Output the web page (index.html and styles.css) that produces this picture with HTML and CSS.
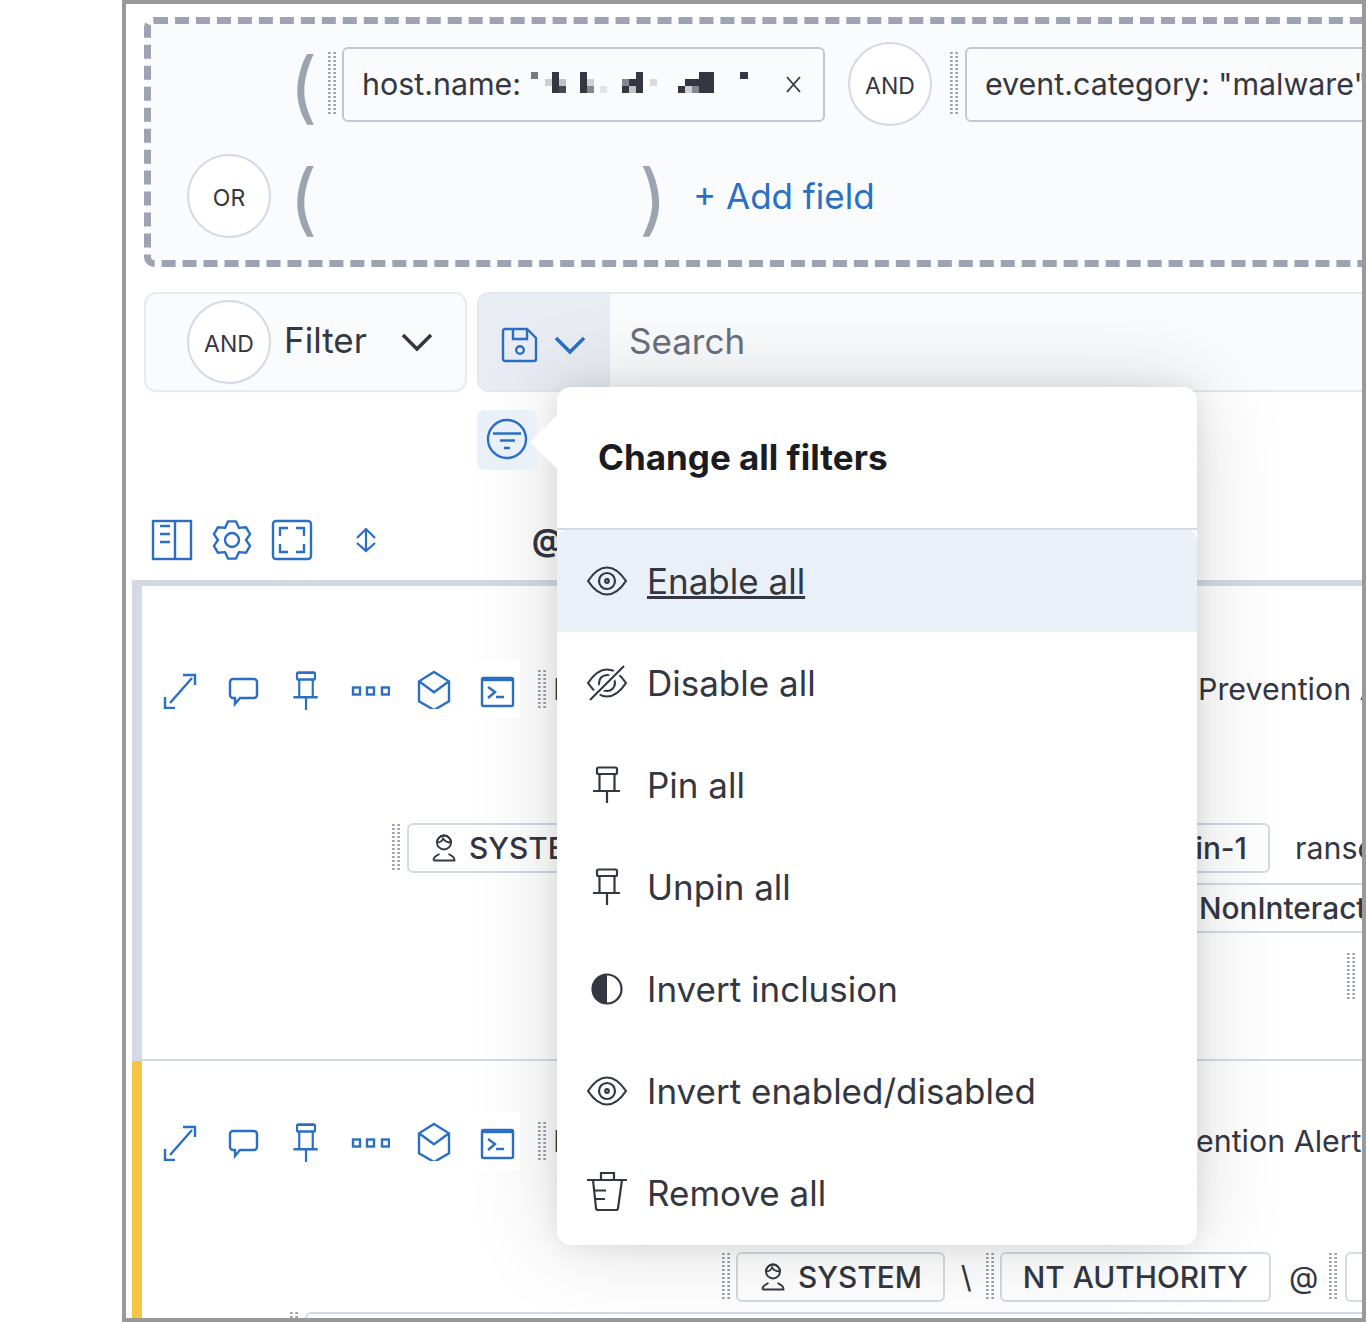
FILE: index.html
```html
<!DOCTYPE html>
<html lang="en">
<head>
    <meta charset="UTF-8">
    <meta name="viewport" content="width=device-width, initial-scale=1.0">
    <title>Change all filters</title>
    <link rel="stylesheet" href="styles.css">
</head>
<body>
    <!-- shared icons -->
    <svg class="icon-defs" aria-hidden="true">
        <symbol id="i-eye" viewBox="0 0 40 40">
            <path d="M1 20C7 11 13 6.500 20 6.500S33 11 39 20C33 29 27 33.500 20 33.500S7 29 1 20Z"/>
            <circle cx="20" cy="20" r="8"/>
            <circle class="solid" cx="20" cy="20" r="1.800"/>
        </symbol>
        <symbol id="i-pin" viewBox="0 0 40 40" preserveAspectRatio="none">
            <rect x="10" y="2.500" width="20" height="6.500" rx="1.500"/>
            <path d="M12.500 9V26M27.500 9V26M6 26H33M20 26V38"/>
        </symbol>
        <symbol id="i-user" viewBox="0 0 24 28">
            <circle cx="12" cy="8.500" r="7"/>
            <path class="solid" d="M5 8.500A7 7 0 0 1 19 8.500C15 8.500 12.500 7 11 4.500C10 7.500 8 8.500 5 8.500Z"/>
            <path d="M1.500 26.500H22.500C23 22.500 19 21.500 16.500 20M7.500 20C5 21.500 1 22.500 1.500 26.500"/>
        </symbol>
        <symbol id="i-expand" viewBox="0 0 40 40">
            <path d="M10 34L32 9M23 6H35V16M5 28V39H15"/>
        </symbol>
        <symbol id="i-comment" viewBox="0 0 40 40">
            <path d="M9 10H30A3 3 0 0 1 33 13V26A3 3 0 0 1 30 29H16L11 35V29H9A3 3 0 0 1 6 26V13A3 3 0 0 1 9 10Z"/>
        </symbol>
        <symbol id="i-dots" viewBox="0 0 40 40">
            <rect x="3" y="18.500" width="7" height="7"/>
            <rect x="17" y="18.500" width="7" height="7"/>
            <rect x="32" y="18.500" width="7" height="7"/>
        </symbol>
        <symbol id="i-cube" viewBox="0 0 40 40">
            <path d="M20 3L35 12.300V32.300L20 41L5 32.300V12.300ZM5 12.300L20 23.300L35 12.300"/>
        </symbol>
        <symbol id="i-terminal" viewBox="0 0 40 40">
            <rect x="4" y="9" width="31" height="28" rx="1.500"/>
            <path class="bar" d="M4 11H35"/>
            <path d="M10 18L17 23L10 29M18 28H26"/>
        </symbol>
    </svg>

    <div class="frame">
        <section class="query-box">
            <div class="query-row">
                <span class="slot"></span>
                <span class="paren">(</span>
                <span class="handle"></span>
                <div class="field host-field">
                    <span>host.name:</span>
                    <svg class="redacted" width="218" height="21" viewBox="0 0 218 21">
                        <rect x="0" y="0" width="7" height="7" fill="#77797f"/>
                        <rect x="14" y="7" width="7" height="7" fill="#ccced2"/>
                        <rect x="21" y="0" width="7" height="21" fill="#343741"/>
                        <rect x="28" y="7" width="7" height="7" fill="#bfc1c5"/>
                        <rect x="28" y="14" width="7" height="7" fill="#45484f"/>
                        <rect x="49" y="0" width="7" height="21" fill="#343741"/>
                        <rect x="56" y="7" width="7" height="7" fill="#cfd1d4"/>
                        <rect x="56" y="14" width="7" height="7" fill="#85878c"/>
                        <rect x="69" y="14" width="7" height="7" fill="#e2e3e5"/>
                        <rect x="91" y="7" width="7" height="7" fill="#85878c"/>
                        <rect x="91" y="14" width="7" height="7" fill="#343741"/>
                        <rect x="98" y="7" width="7" height="7" fill="#343741"/>
                        <rect x="98" y="14" width="7" height="7" fill="#bfc1c5"/>
                        <rect x="105" y="0" width="7" height="21" fill="#343741"/>
                        <rect x="119" y="7" width="7" height="7" fill="#d8d9dc"/>
                        <rect x="147" y="14" width="7" height="7" fill="#343741"/>
                        <rect x="154" y="7" width="7" height="7" fill="#343741"/>
                        <rect x="154" y="14" width="7" height="7" fill="#d0d1d4"/>
                        <rect x="161" y="7" width="7" height="7" fill="#343741"/>
                        <rect x="161" y="14" width="7" height="7" fill="#85878c"/>
                        <rect x="168" y="0" width="15" height="21" fill="#343741"/>
                        <rect x="209" y="0" width="8" height="7" fill="#343741"/>
                    </svg>
                    <svg class="icon close-icon" width="15" height="17" viewBox="0 0 15 17">
                        <path d="M1 1L14 16M14 1L1 16"/>
                    </svg>
                </div>
                <span class="logic-badge and-first">AND</span>
                <span class="handle"></span>
                <div class="field category-field">event.category: "malware"</div>
            </div>
            <div class="query-row">
                <span class="logic-badge">OR</span>
                <span class="paren">(</span>
                <span class="paren paren-close">)</span>
                <a class="add-field" href="#">+ Add field</a>
            </div>
        </section>

        <div class="search-row">
            <div class="filter-select">
                <span class="logic-badge">AND</span>
                <span class="filter-label">Filter</span>
                <svg class="icon chevron dark" width="32" height="18" viewBox="0 0 32 18">
                    <path d="M2 2L16 16L30 2"/>
                </svg>
            </div>
            <div class="search-box">
                <div class="saved-queries">
                    <svg class="icon blue" width="40" height="40" viewBox="0 0 40 40">
                        <path d="M5 4H27L36 13V34A2 2 0 0 1 34 36H5A2 2 0 0 1 3 34V6A2 2 0 0 1 5 4ZM13 4V14H27V4"/>
                        <circle cx="20" cy="25" r="3.800"/>
                    </svg>
                    <svg class="icon chevron blue" width="32" height="18" viewBox="0 0 32 18">
                        <path d="M2 2L16 16L30 2"/>
                    </svg>
                </div>
                <span class="search-text">Search</span>
            </div>
        </div>

        <button class="filter-button" type="button">
            <svg class="icon blue" width="42" height="42" viewBox="0 0 42 42">
                <circle cx="21" cy="20" r="19"/>
                <path d="M7 14.500H35M14 21.500H29M18 29H24"/>
            </svg>
        </button>

        <div class="toolbar">
            <svg class="icon blue" width="40" height="40" viewBox="0 0 40 40">
                <rect x="1" y="1" width="38" height="38"/>
                <path d="M23 1V39M8 6H18M8 14H18M8 22H18"/>
            </svg>
            <svg class="icon blue" width="40" height="40" viewBox="0 0 40 40">
                <path stroke-linejoin="round" d="M16 1.400H24L27 7.900L34.100 7.300L38.100 14.100L34 20L38.100 25.900L34.100 32.700L27 32.100L24 38.600H16L13 32.100L5.900 32.700L1.900 25.900L6 20L1.900 14.100L5.900 7.300L13 7.900Z"/>
                <circle cx="20" cy="20" r="7"/>
            </svg>
            <svg class="icon blue" width="40" height="40" viewBox="0 0 40 40">
                <rect x="1" y="1" width="38" height="38" rx="3"/>
                <path d="M16 8H8V16M24 8H32V16M16 32H8V24M24 32H32V24"/>
            </svg>
            <svg class="icon blue sort-icon" width="40" height="40" viewBox="0 0 40 40">
                <path d="M11 18L20 9L29 18M11 23L20 31L29 23M20 10V30"/>
            </svg>
            <span class="column-title">@timestamp</span>
        </div>

        <div class="timeline">
            <article class="event event-first">
                <div class="event-head">
                    <span class="action"><svg class="icon blue" width="40" height="40"><use href="#i-expand"/></svg></span>
                    <span class="action action-tight"><svg class="icon blue" width="40" height="40"><use href="#i-comment"/></svg></span>
                    <span class="action"><svg class="icon blue pin-icon" width="36" height="42"><use href="#i-pin"/></svg></span>
                    <span class="action"><svg class="icon blue" width="40" height="40"><use href="#i-dots"/></svg></span>
                    <span class="action"><svg class="icon blue" width="40" height="40"><use href="#i-cube"/></svg></span>
                    <span class="action action-last"><svg class="icon blue" width="40" height="40"><use href="#i-terminal"/></svg></span>
                    <span class="handle row-handle"></span>
                    <span class="name-lead lead-first">Malware</span>
                    <span class="name-rest">Prevention Alert</span>
                </div>
                <div class="event-line line-user">
                    <span class="handle pill-handle"></span>
                    <span class="pill pill-system">
                        <svg class="icon user-icon" width="24" height="28"><use href="#i-user"/></svg>
                        SYSTEM
                    </span>
                    <span class="pill pill-host">admin-1</span>
                    <span class="plain">ransomware</span>
                </div>
                <div class="event-line line-logon">
                    <span class="pill pill-logon">NonInteractive</span>
                </div>
                <div class="event-line line-end">
                    <span class="handle pill-handle"></span>
                </div>
            </article>

            <article class="event event-second">
                <div class="event-head">
                    <span class="action"><svg class="icon blue" width="40" height="40"><use href="#i-expand"/></svg></span>
                    <span class="action action-tight"><svg class="icon blue" width="40" height="40"><use href="#i-comment"/></svg></span>
                    <span class="action"><svg class="icon blue pin-icon" width="36" height="42"><use href="#i-pin"/></svg></span>
                    <span class="action"><svg class="icon blue" width="40" height="40"><use href="#i-dots"/></svg></span>
                    <span class="action"><svg class="icon blue" width="40" height="40"><use href="#i-cube"/></svg></span>
                    <span class="action action-last"><svg class="icon blue" width="40" height="40"><use href="#i-terminal"/></svg></span>
                    <span class="handle row-handle"></span>
                    <span class="name-lead lead-second">Malware</span>
                    <span class="name-rest">Prevention Alert</span>
                </div>
                <div class="event-line line-account">
                    <span class="handle pill-handle"></span>
                    <span class="pill">
                        <svg class="icon user-icon" width="24" height="28"><use href="#i-user"/></svg>
                        SYSTEM
                    </span>
                    <span class="plain slash">\</span>
                    <span class="handle pill-handle"></span>
                    <span class="pill">NT AUTHORITY</span>
                    <span class="plain at">@</span>
                    <span class="handle pill-handle"></span>
                    <span class="pill pill-stub"></span>
                </div>
                <div class="event-line line-next">
                    <span class="handle pill-handle"></span>
                    <span class="pill pill-next"></span>
                </div>
            </article>
        </div>

        <div class="popover">
            <h3 class="popover-title">Change all filters</h3>
            <ul class="menu">
                <li class="menu-item active">
                    <svg class="icon" width="40" height="40"><use href="#i-eye"/></svg>
                    <span>Enable all</span>
                </li>
                <li class="menu-item">
                    <svg class="icon" width="40" height="40" viewBox="0 0 40 40">
                        <path d="M1 20C7 11 13 6.500 20 6.500S33 11 39 20C33 29 27 33.500 20 33.500S7 29 1 20Z"/>
                        <circle cx="20" cy="20" r="8"/>
                        <path class="gap" d="M3 36L37 3"/>
                        <path d="M3 37L37 3"/>
                    </svg>
                    <span>Disable all</span>
                </li>
                <li class="menu-item">
                    <svg class="icon" width="40" height="40"><use href="#i-pin"/></svg>
                    <span>Pin all</span>
                </li>
                <li class="menu-item">
                    <svg class="icon" width="40" height="40"><use href="#i-pin"/></svg>
                    <span>Unpin all</span>
                </li>
                <li class="menu-item">
                    <svg class="icon" width="40" height="40" viewBox="0 0 40 40">
                        <circle cx="20" cy="20" r="14.500"/>
                        <path class="solid" d="M20 5.500A14.500 14.500 0 0 0 20 34.500Z"/>
                    </svg>
                    <span>Invert inclusion</span>
                </li>
                <li class="menu-item">
                    <svg class="icon" width="40" height="40"><use href="#i-eye"/></svg>
                    <span>Invert enabled/disabled</span>
                </li>
                <li class="menu-item">
                    <svg class="icon" width="40" height="40" viewBox="0 0 40 40">
                        <path d="M0 7H40M14 7V0H27V7M6 7L9 35A2 2 0 0 0 11 37H29A2 2 0 0 0 31 35L35 7M7 17.500H19M8 26H18"/>
                    </svg>
                    <span>Remove all</span>
                </li>
            </ul>
        </div>
    </div>
</body>
</html>
```

FILE: styles.css
```css
* {
    box-sizing: border-box;
}

body {
    margin: 0;
    background-color: #ffffff;
    font-family: Inter, "Liberation Sans", sans-serif;
    color: #343741;
}

.icon-defs {
    position: absolute;
    width: 0;
    height: 0;
}

.frame {
    position: relative;
    width: 1244px;
    height: 1322px;
    margin-left: 122px;
    border: 4px solid #999999;
    overflow: hidden;
}

/* icons */
.icon {
    flex: none;
    display: block;
    overflow: visible;
    fill: none;
    stroke: currentColor;
    stroke-width: 2.2;
}

.icon .solid {
    fill: currentColor;
    stroke: none;
}

.icon .bar {
    stroke-width: 4;
}

.icon .gap {
    stroke: #ffffff;
    stroke-width: 7;
}

.blue {
    color: #2b6fc4;
    stroke-width: 2.4;
}

.dark {
    color: #343741;
}

.chevron {
    stroke-width: 3.500;
}

.pin-icon {
    margin: 4px 0 0 0;
}

/* drag handle: two columns of small dots */
.handle {
    flex: none;
    display: block;
    width: 8px;
    height: 64px;
    background-image: conic-gradient(transparent 75%, #9da3b2 0);
    background-size: 5.330px 4px;
}

/* query builder */
.query-box {
    width: 1300px;
    height: 250px;
    margin: 13px 0 0 18px;
    padding: 18px 0 0 36px;
    border: 7px dashed #9da3b2;
    border-radius: 10px;
    background-color: #fafbfd;
}

.query-row {
    display: flex;
    align-items: center;
    height: 84px;
    margin-bottom: 28px;
}

.slot {
    flex: none;
    width: 84px;
}

.paren {
    flex: none;
    width: 39px;
    height: 84px;
    margin-left: 18px;
    font-size: 78px;
    line-height: 88px;
    color: #9da3b2;
}

.paren-close {
    width: 54px;
    margin-left: 311px;
}

.logic-badge {
    flex: none;
    display: flex;
    align-items: center;
    justify-content: center;
    width: 84px;
    height: 84px;
    padding-top: 3px;
    border: 2px solid #d3dae6;
    border-radius: 50%;
    background-color: #ffffff;
    font-size: 23px;
}

.and-first {
    margin: 0 18px 0 23px;
}

.field {
    flex: none;
    display: flex;
    align-items: center;
    height: 75px;
    margin-left: 6px;
    padding-left: 18px;
    border: 2px solid #c2c7d4;
    border-radius: 6px;
    font-size: 30.400px;
    white-space: nowrap;
}

.host-field {
    width: 483px;
}

.redacted {
    flex: none;
    margin: -4px 0 0 10px;
}

.close-icon {
    margin-left: 37px;
    stroke-width: 1.800;
}

.category-field {
    width: 560px;
    margin-left: 7px;
}

.add-field {
    font-size: 35px;
    color: #2b6fc4;
    text-decoration: none;
}

/* filter and search bar */
.search-row {
    display: flex;
    gap: 10px;
    margin: 25px 0 0 18px;
}

.filter-select {
    flex: none;
    display: flex;
    align-items: center;
    width: 323px;
    height: 100px;
    padding-left: 41px;
    border: 2px solid #e6ebf2;
    border-radius: 12px;
    background-color: #fafbfd;
}

.filter-label {
    margin: -4px 34px 0 13px;
    font-size: 35px;
}

.search-box {
    flex: none;
    display: flex;
    align-items: center;
    width: 900px;
    height: 100px;
    border: 2px solid #e3e8f0;
    border-radius: 12px 0 0 12px;
    background-color: #fafbfd;
}

.saved-queries {
    flex: none;
    display: flex;
    align-items: center;
    gap: 14px;
    width: 131px;
    height: 100%;
    padding: 6px 0 0 21px;
    border-radius: 10px 0 0 10px;
    background-color: #e9edf3;
}

.search-text {
    margin: -2px 0 0 19px;
    font-size: 35px;
    color: #69707d;
}

.filter-button {
    position: relative;
    z-index: 1;
    display: flex;
    align-items: center;
    justify-content: center;
    width: 60px;
    height: 60px;
    margin: 18px 0 0 351px;
    padding: 0;
    border: none;
    border-radius: 8px;
    background-color: #e9f0f8;
}

/* table toolbar */
.toolbar {
    display: flex;
    align-items: center;
    gap: 20px;
    height: 40px;
    margin: 50px 0 0 26px;
}

.sort-icon {
    margin-left: 14px;
    stroke-width: 2.200;
}

.column-title {
    margin-left: 126px;
    font-size: 30.400px;
    font-weight: 700;
}

/* timeline rows */
.timeline {
    margin: 20px 0 0 6px;
    border-top: 6px solid #d3dae6;
}

.event {
    border-left: 10px solid #d3dae6;
    white-space: nowrap;
}

.event-first {
    height: 475px;
    padding-top: 74px;
    border-bottom: 2px solid #d3dae6;
}

.event-second {
    height: 260px;
    padding-top: 51px;
    border-left-color: #f5c645;
}

.event-head {
    display: flex;
    align-items: center;
    padding-left: 6px;
}

.action {
    position: relative;
    z-index: 1;
    flex: none;
    display: flex;
    align-items: center;
    justify-content: center;
    width: 64px;
    height: 58px;
    background-color: #ffffff;
}

.action-tight {
    margin-right: -2px;
}

.action-last {
    width: 44px;
    margin-left: 10px;
}

.row-handle {
    height: 38px;
    margin-left: 18px;
}

.name-lead {
    flex: none;
    margin-left: 7px;
    overflow: hidden;
    font-size: 30.400px;
}

.lead-first {
    width: 645px;
}

.lead-second {
    width: 579px;
}

.name-rest {
    flex: none;
    font-size: 30.400px;
}

.event-line {
    display: flex;
    align-items: center;
}

.pill {
    flex: none;
    display: flex;
    align-items: center;
    gap: 13px;
    height: 50px;
    margin-left: 6px;
    padding: 0 21px;
    border: 2px solid #d3dae6;
    border-radius: 6px;
    font-size: 29.800px;
    font-weight: 500;
}

.pill-handle {
    height: 48px;
}

.user-icon {
    margin-left: 2px;
    color: #343741;
    stroke-width: 1.800;
}

.plain {
    flex: none;
    font-size: 30.400px;
}

.line-user {
    margin-top: 105px;
    padding-left: 250px;
}

.pill-system {
    width: 300px;
    margin-left: 7px;
}

.pill-host {
    justify-content: flex-end;
    width: 400px;
    margin-left: 163px;
}

.line-user .plain {
    margin-left: 25px;
}

.line-logon {
    margin-top: 10px;
    padding-left: 1028px;
}

.pill-logon {
    width: 320px;
}

.line-end {
    margin-top: 20px;
    padding-left: 1205px;
}

.line-account {
    margin-top: 82px;
    padding-left: 580px;
}

.slash {
    margin: 0 14px 0 16px;
}

.at {
    margin: 0 11px 0 18px;
}

.pill-stub {
    width: 80px;
    margin-left: 8px;
}

.line-next {
    align-items: flex-start;
    margin-top: 10px;
    padding-left: 148px;
}

.pill-next {
    width: 1100px;
    margin-left: 7px;
}

/* change all filters popover */
.popover {
    position: absolute;
    top: 383px;
    left: 431px;
    width: 640px;
    height: 858px;
    border-radius: 14px;
    background-color: #ffffff;
    box-shadow: 0 0 90px rgba(0, 0, 0, 0.15), 0 0 24px rgba(0, 0, 0, 0.08);
}

.popover::before {
    content: "";
    position: absolute;
    z-index: 2;
    top: 36px;
    left: -19px;
    width: 38px;
    height: 38px;
    background-color: #ffffff;
    transform: rotate(45deg);
}

.popover-title {
    height: 143px;
    margin: 0;
    padding: 48px 0 0 41px;
    border-bottom: 2px solid #d3dae6;
    font-size: 35px;
    line-height: 44px;
    font-weight: 700;
    color: #1a1c21;
}

.menu {
    margin: 0;
    padding: 0;
    list-style: none;
}

.menu-item {
    display: flex;
    align-items: center;
    gap: 20px;
    height: 102px;
    padding-left: 30px;
    font-size: 35px;
}

.menu-item:last-child {
    border-radius: 0 0 14px 14px;
}

.active {
    border-radius: 10px 10px 0 0;
    background-color: #e9f0f8;
}

.active span {
    text-decoration: underline;
}
```
